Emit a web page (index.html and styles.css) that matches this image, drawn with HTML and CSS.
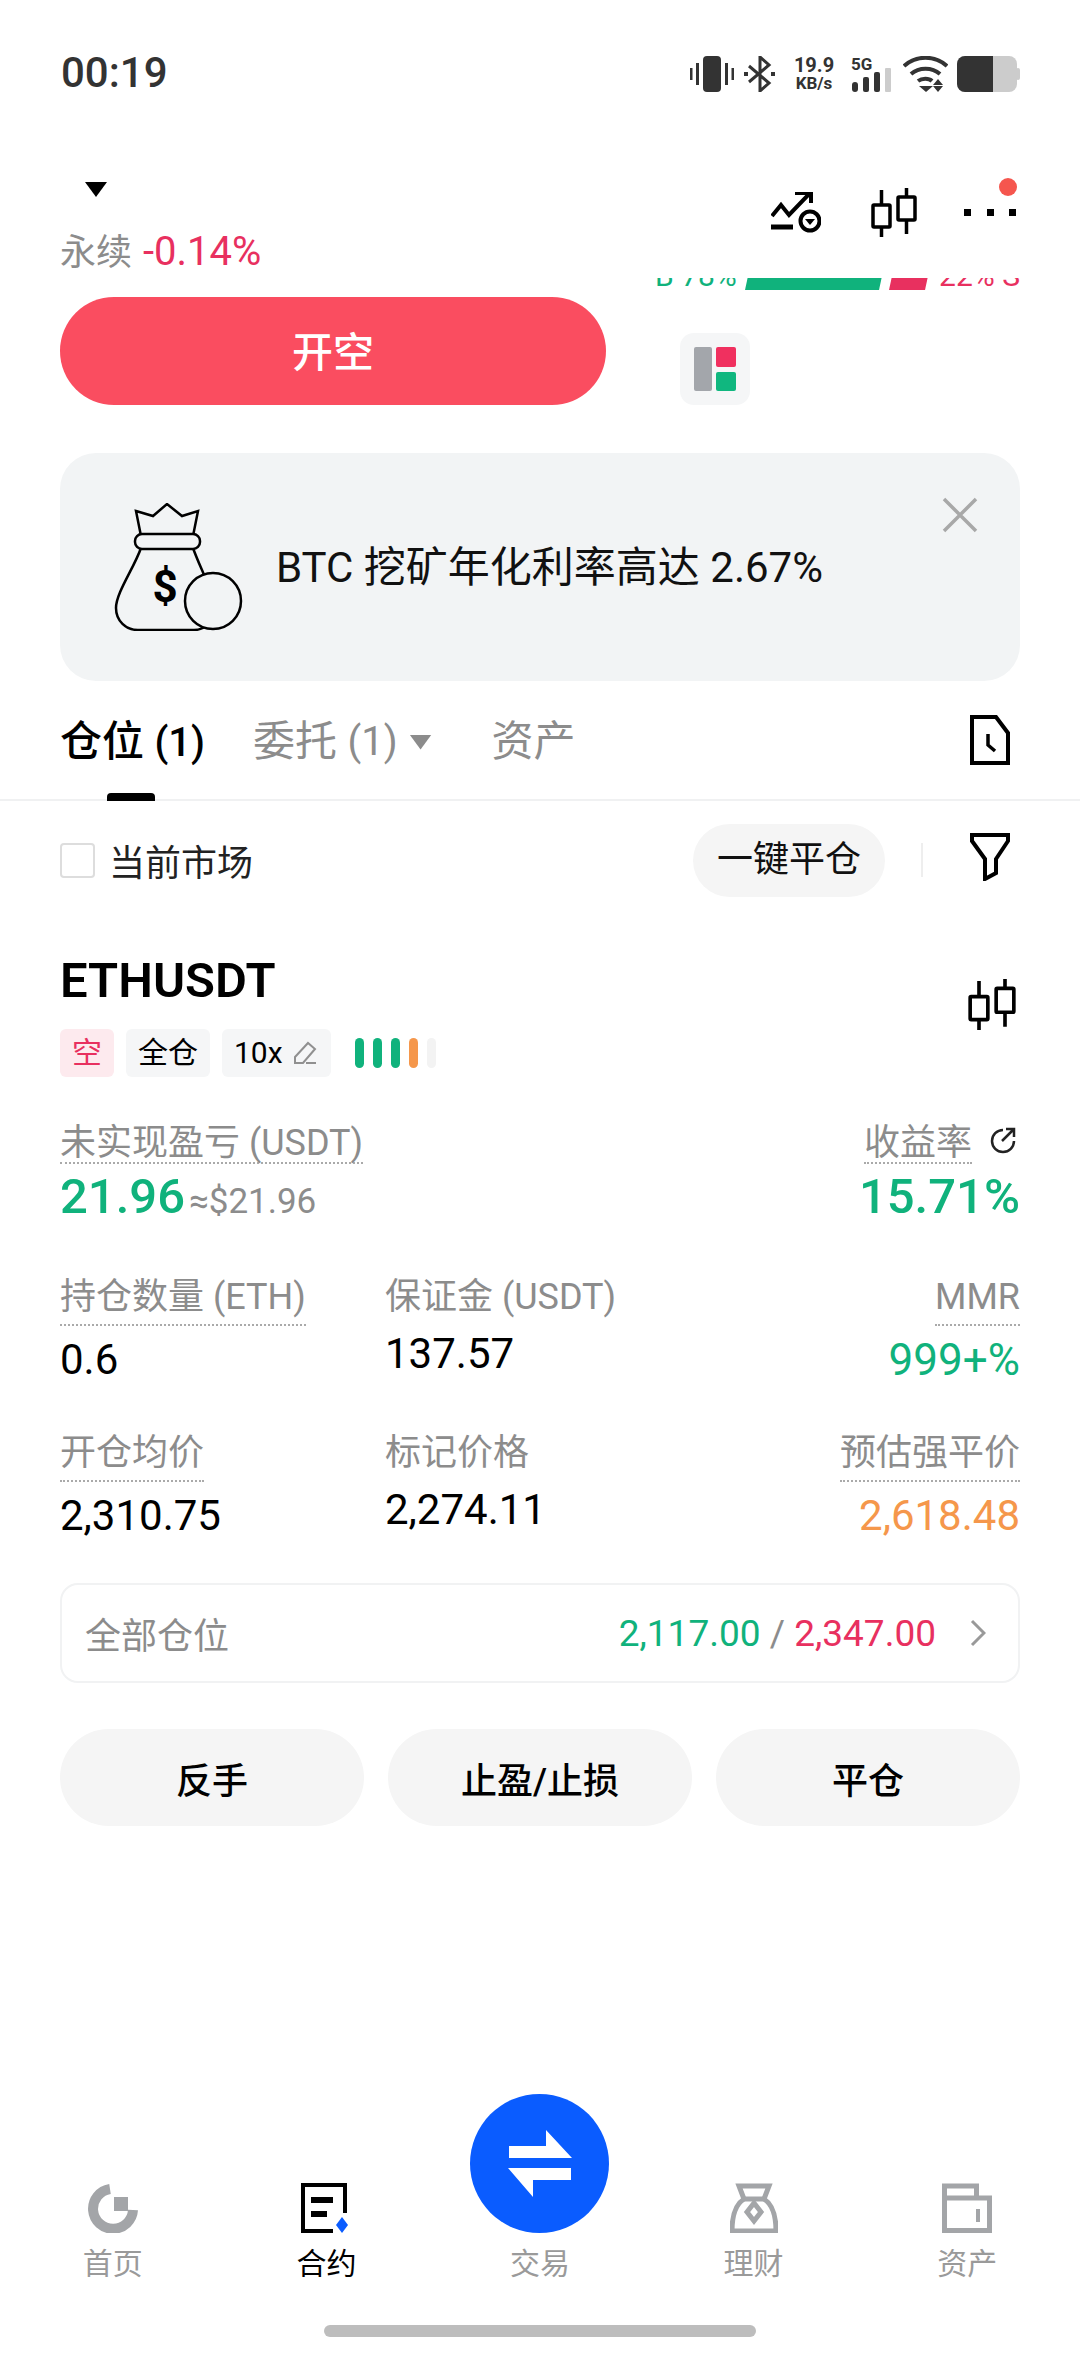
FILE: index.html
```html
<!DOCTYPE html>
<html lang="zh-CN">
<head>
    <meta charset="UTF-8">
    <meta name="viewport" content="width=device-width, initial-scale=1.0">
    <title>ETHUSDT 合约</title>
    <link rel="stylesheet" href="styles.css">
</head>
<body>
    <div class="page">
        <div class="statusbar">
            <span class="clock">00:19</span>
            <div class="status-icons">
                <svg width="44" height="36" viewBox="0 0 44 36" fill="#333">
                    <rect x="13" y="0" width="18" height="36" rx="4"/>
                    <rect x="0" y="12" width="2.5" height="12"/>
                    <rect x="6" y="7" width="3" height="22"/>
                    <rect x="35" y="7" width="3" height="22"/>
                    <rect x="41.5" y="12" width="2.5" height="12"/>
                </svg>
                <svg class="bt" width="31" height="36" viewBox="0 0 31 36" fill="none" stroke="#333" stroke-width="3">
                    <path d="M5 10l20 17-9 8V1l9 8L5 26"/>
                    <rect x="0" y="16" width="4" height="4" fill="#333" stroke="none"/>
                    <rect x="27" y="16" width="4" height="4" fill="#333" stroke="none"/>
                </svg>
                <div class="speed"><span>19.9</span><span class="speed-unit">KB/s</span></div>
                <div class="signal">
                    <span class="signal-label">5G</span>
                    <svg width="40" height="24" viewBox="0 0 40 24">
                        <rect x="0" y="14" width="6" height="10" rx="3" fill="#333"/>
                        <rect x="11" y="9" width="6" height="15" rx="2" fill="#333"/>
                        <rect x="22" y="4" width="6" height="20" rx="2" fill="#333"/>
                        <rect x="33" y="0" width="6" height="24" rx="1" fill="#ccc"/>
                    </svg>
                </div>
                <svg class="wifi" width="45" height="36" viewBox="0 0 45 36" fill="none" stroke="#333" stroke-width="4">
                    <path d="M1 10C13-1 32-1 44 10"/>
                    <path d="M8 18c8-7 21-7 29 0"/>
                    <path d="M15 25c4-3 11-3 14 0"/>
                    <path d="M16 30h14l-7 6z" fill="#333" stroke="none"/>
                    <path d="M35 23l5 6h-10zM35 36l5-6h-10z" fill="#333" stroke="none"/>
                </svg>
                <svg class="battery" width="63" height="36" viewBox="0 0 63 36">
                    <rect x="0" y="0" width="60" height="36" rx="8" fill="#ccc"/>
                    <rect x="59" y="12" width="4" height="12" rx="2" fill="#ccc"/>
                    <path d="M8 0h28v36H8a8 8 0 0 1-8-8V8a8 8 0 0 1 8-8z" fill="#333"/>
                </svg>
            </div>
        </div>

        <div class="toolbar">
            <div class="symbol">
                <span class="caret"></span>
                <div class="funding"><span class="funding-type">永续</span> <span class="funding-rate red">-0.14%</span></div>
            </div>
            <div class="tools">
                <svg width="50" height="50" viewBox="0 0 50 50" fill="none" stroke="#000" stroke-width="4">
                    <path d="M1 24l9-11 8 10L39 1"/>
                    <path d="M24 1h16v10"/>
                    <path d="M0 35h22" stroke-width="5"/>
                    <circle cx="39" cy="29" r="9.500"/>
                    <path d="M34 27h10l-5 6z" fill="#000" stroke="none"/>
                </svg>
                <svg class="candles" width="46" height="50" viewBox="0 0 46 50" fill="none" stroke="#000" stroke-width="3.500">
                    <rect x="2" y="17" width="17" height="22" rx="1"/>
                    <path d="M10.500 2v15M10.500 39v10"/>
                    <rect x="27" y="9" width="17" height="23" rx="1"/>
                    <path d="M35.500 0v9M35.500 32v14"/>
                </svg>
                <div class="more">
                    <span class="dot"></span><span class="dot"></span><span class="dot"></span>
                    <span class="badge"></span>
                </div>
            </div>
        </div>

        <div class="depth-strip">
            <div class="depth-inner">
                <span class="green">B 78%</span>
                <span class="depth-buy"></span>
                <span class="depth-sell"></span>
                <span class="red">22% S</span>
            </div>
        </div>

        <div class="order-row">
            <button class="btn-short">开空</button>
            <div class="layout-btn">
                <svg width="42" height="44" viewBox="0 0 42 44">
                    <rect x="0" y="0" width="18" height="44" rx="2" fill="#a3a6ab"/>
                    <rect x="22" y="0" width="20" height="20" rx="2" fill="#f0305f"/>
                    <rect x="22" y="25" width="20" height="19" rx="2" fill="#10b77f"/>
                </svg>
            </div>
        </div>

        <div class="banner">
            <svg class="bag" width="130" height="128" viewBox="0 0 130 128" fill="none" stroke="#000" stroke-width="2.500">
                <path d="M22 8l17 5L53 1l15 12 16-5-5 25H27z" fill="#f2f4f5"/>
                <path d="M27 45C20 65 2 90 2 105c0 13 10 22 22 22h56c12 0 20-10 20-22 0-15-14-40-21-60z" fill="#f2f4f5"/>
                <rect x="21" y="31" width="65" height="15" rx="7" fill="#f2f4f5"/>
                <ellipse cx="99" cy="98" rx="28" ry="28" fill="#f2f4f5"/>
                <text x="51" y="99" class="bag-sign">$</text>
            </svg>
            <span class="banner-text">BTC 挖矿年化利率高达 2.67%</span>
            <svg class="banner-close" width="36" height="36" viewBox="0 0 36 36" stroke="#a8a8a8" stroke-width="3.500">
                <path d="M2 2l32 32M34 2L2 34"/>
            </svg>
        </div>

        <div class="tabs">
            <span class="tab tab-active">仓位 <em>(1)</em><i class="tab-line"></i></span>
            <span class="tab tab-orders">委托&nbsp;<em>(1)</em><b class="tab-caret"></b></span>
            <span class="tab tab-assets">资产</span>
            <svg class="tab-doc" width="40" height="50" viewBox="0 0 40 50" fill="none" stroke="#000" stroke-width="4">
                <path d="M2 2h24l12 16v30H2z"/>
                <path d="M18 19v11l7 6" stroke-width="3.500"/>
            </svg>
        </div>

        <div class="filter-row">
            <span class="checkbox"></span>
            <span class="filter-label">当前市场</span>
            <span class="close-all">一键平仓</span>
            <span class="filter-sep"></span>
            <svg class="filter-icon" width="40" height="48" viewBox="0 0 40 48" fill="none" stroke="#000" stroke-width="4">
                <path d="M2 2h36v6L26 26v14l-11 6V26L2 8z"/>
            </svg>
        </div>

        <div class="position-head">
            <div>
                <h2 class="pair">ETHUSDT</h2>
                <div class="tags">
                    <span class="tag tag-short">空</span>
                    <span class="tag">全仓</span>
                    <span class="tag tag-lev">10x
                        <svg width="24" height="24" viewBox="0 0 24 24" fill="none" stroke="#909090" stroke-width="2">
                            <path d="M2 16L15 2l7 6L10 22H2zM13 22h10"/>
                        </svg>
                    </span>
                    <div class="risk">
                        <i class="risk-on"></i><i class="risk-on"></i><i class="risk-on"></i><i class="risk-warn"></i><i class="risk-off"></i>
                    </div>
                </div>
            </div>
            <svg class="candles head-candles" width="48" height="52" viewBox="0 0 46 50" fill="none" stroke="#000" stroke-width="3.500">
                <rect x="2" y="17" width="17" height="22" rx="1"/>
                <path d="M10.500 2v15M10.500 39v10"/>
                <rect x="27" y="9" width="17" height="23" rx="1"/>
                <path d="M35.500 0v9M35.500 32v14"/>
            </svg>
        </div>

        <div class="pnl-row">
            <div>
                <span class="label dotted">未实现盈亏 (USDT)</span>
                <div class="pnl-value"><span class="big green">21.96</span> <span class="approx">≈$21.96</span></div>
            </div>
            <div class="align-right">
                <div class="roi-label">
                    <span class="label dotted">收益率</span>
                    <svg width="28" height="28" viewBox="0 0 28 28" fill="none" stroke="#222" stroke-width="2.500">
                        <path d="M14 3a11 11 0 1 0 11 11"/>
                        <path d="M13 14L25 2M17 2h8v8"/>
                    </svg>
                </div>
                <div class="pnl-value"><span class="big green">15.71%</span></div>
            </div>
        </div>

        <div class="data-grid">
            <div class="cell">
                <span class="label dotted">持仓数量 (ETH)</span>
                <div class="value">0.6</div>
            </div>
            <div class="cell cell-plain">
                <span class="label">保证金 (USDT)</span>
                <div class="value">137.57</div>
            </div>
            <div class="cell align-right">
                <span class="label dotted">MMR</span>
                <div class="value value-mmr green">999+%</div>
            </div>
            <div class="cell">
                <span class="label dotted">开仓均价</span>
                <div class="value">2,310.75</div>
            </div>
            <div class="cell cell-plain">
                <span class="label">标记价格</span>
                <div class="value">2,274.11</div>
            </div>
            <div class="cell align-right">
                <span class="label dotted">预估强平价</span>
                <div class="value orange">2,618.48</div>
            </div>
        </div>

        <div class="all-positions">
            <span class="all-label">全部仓位</span>
            <span class="all-values"><span class="green">2,117.00</span> <span class="slash">/</span> <span class="red">2,347.00</span></span>
            <svg width="16" height="28" viewBox="0 0 16 28" fill="none" stroke="#999" stroke-width="3">
                <path d="M2 2l12 12L2 26"/>
            </svg>
        </div>

        <div class="actions">
            <button class="action">反手</button>
            <button class="action">止盈/止损</button>
            <button class="action">平仓</button>
        </div>

        <nav class="nav">
            <a class="nav-item">
                <svg width="50" height="50" viewBox="0 0 50 50" fill="none">
                    <path d="M22 6A20 20 0 1 0 45 27" stroke="#a3a5a8" stroke-width="10"/>
                    <rect x="26" y="14" width="14" height="14" fill="#a3a5a8"/>
                </svg>
                <span>首页</span>
            </a>
            <a class="nav-item nav-active">
                <svg width="50" height="50" viewBox="0 0 50 50" fill="none">
                    <path d="M44 30V2H2v46h30" stroke="#000" stroke-width="4"/>
                    <rect x="10" y="14" width="22" height="6" fill="#000"/>
                    <rect x="10" y="28" width="16" height="6" fill="#000"/>
                    <path d="M41 34l6 8-6 8-6-8z" fill="#0a5cff"/>
                </svg>
                <span>合约</span>
            </a>
            <a class="nav-item nav-trade">
                <svg class="nav-spacer" width="50" height="50"></svg>
                <span>交易</span>
                <div class="fab">
                    <svg width="139" height="139" viewBox="0 0 139 139">
                        <path d="M39 52h37V36l26 28H39z" fill="#fff"/>
                        <path d="M38 74h63v12H63v17z" fill="#fff"/>
                    </svg>
                </div>
            </a>
            <a class="nav-item">
                <svg width="48" height="50" viewBox="0 0 48 50" fill="none" stroke="#a3a5a8" stroke-width="5">
                    <path d="M9 3h30l-5 13c8 5 12 14 12 32H2c0-18 4-27 12-32z"/>
                    <path d="M24 20l7 9-7 9-7-9z"/>
                    <path d="M12 16h24"/>
                </svg>
                <span>理财</span>
            </a>
            <a class="nav-item">
                <svg width="50" height="50" viewBox="0 0 50 50" fill="none" stroke="#a3a5a8" stroke-width="5">
                    <path d="M2.500 47.500V3h32v12"/>
                    <path d="M2.500 15h45v32.500h-45z"/>
                    <path d="M36 26v13" stroke-width="4"/>
                </svg>
                <span>资产</span>
            </a>
        </nav>
        <div class="home-indicator"></div>
    </div>
</body>
</html>
```

FILE: styles.css
```css
* {
    box-sizing: border-box;
}
body {
    margin: 0;
    background: #fff;
    font-family: Roboto, "Noto Sans CJK SC", sans-serif;
    color: #000;
}
.page {
    width: 1080px;
    height: 2358px;
    display: flex;
    flex-direction: column;
    overflow: hidden;
}
.green { color: #10b27c; }
.red { color: #e8305f; }
.orange { color: #f5974b; }

/* status bar */
.statusbar {
    height: 100px;
    padding: 50px 60px 0 61px;
    display: flex;
    justify-content: space-between;
    align-items: flex-start;
}
.clock {
    font-size: 42px;
    font-weight: 500;
    line-height: 46px;
    color: #333;
}
.status-icons {
    display: flex;
    align-items: center;
    margin-top: 6px;
    height: 36px;
}
.bt { margin-left: 10px; }
.speed {
    width: 44px;
    margin-left: 17px;
    display: flex;
    flex-direction: column;
    align-items: center;
    font-size: 20px;
    line-height: 19px;
    font-weight: 700;
    color: #333;
}
.speed-unit {
    font-size: 17px;
    line-height: 17px;
}
.signal {
    position: relative;
    width: 41px;
    height: 36px;
    margin-left: 16px;
    padding-top: 12px;
}
.signal-label {
    position: absolute;
    left: -1px;
    top: 0;
    font-size: 17px;
    line-height: 17px;
    font-weight: 700;
    color: #333;
}
.wifi { margin-left: 10px; }
.battery { margin-left: 9px; }

/* top toolbar */
.toolbar {
    height: 178px;
    padding: 0 60px;
    display: flex;
    justify-content: space-between;
}
.symbol {
    padding-top: 82px;
}
.caret {
    display: block;
    width: 22px;
    height: 15px;
    margin-left: 25px;
    background: #000;
    clip-path: polygon(0 0, 100% 0, 50% 100%);
}
.funding {
    margin-top: 33px;
    font-size: 36px;
    line-height: 44px;
}
.funding-type { color: #8c8c8c; }
.funding-rate {
    font-size: 40px;
    margin-left: 2px;
}
.tools {
    display: flex;
    align-items: flex-start;
    padding-top: 92px;
}
.tools .candles {
    margin-left: 50px;
    margin-top: -4px;
}
.more {
    position: relative;
    width: 52px;
    height: 50px;
    margin-left: 47px;
    margin-right: 4px;
    padding-top: 17px;
    display: flex;
    justify-content: space-between;
    align-items: flex-start;
}
.dot {
    width: 7px;
    height: 7px;
    background: #000;
}
.badge {
    position: absolute;
    right: -1px;
    top: -14px;
    width: 18px;
    height: 18px;
    border-radius: 50%;
    background: #f5564e;
}

/* clipped depth bar */
.depth-strip {
    height: 12px;
    overflow: hidden;
    padding: 0 60px 0 655px;
}
.depth-inner {
    margin-top: -16px;
    display: flex;
    align-items: center;
    justify-content: space-between;
    font-size: 30px;
    line-height: 28px;
}
.depth-buy {
    width: 134px;
    height: 28px;
    background: #10b27c;
    transform: skewX(-12deg);
}
.depth-sell {
    width: 36px;
    height: 28px;
    background: #e8305f;
    transform: skewX(-12deg);
}

.order-row {
    margin-top: 7px;
    padding: 0 60px;
    display: flex;
    align-items: flex-end;
    gap: 74px;
}
.btn-short {
    width: 546px;
    height: 108px;
    border: none;
    border-radius: 54px;
    background: #fa4d60;
    color: #fff;
    font-family: inherit;
    font-size: 41px;
    font-weight: 500;
    padding-bottom: 6px;
}
.layout-btn {
    width: 70px;
    height: 72px;
    border-radius: 14px;
    background: #f5f6f7;
    display: flex;
    align-items: center;
    justify-content: center;
}

/* banner */
.banner {
    position: relative;
    margin: 48px 60px 0;
    height: 228px;
    padding-left: 54px;
    border-radius: 36px;
    background: #f2f4f5;
    display: flex;
    align-items: center;
    gap: 32px;
}
.bag { flex: none; }
.bag-sign {
    font-size: 44px;
    font-weight: 700;
    text-anchor: middle;
    fill: #000;
    stroke: none;
}
.banner-text {
    font-size: 42px;
    color: #111;
    padding-bottom: 8px;
}
.banner-close {
    position: absolute;
    right: 42px;
    top: 44px;
}

/* tabs */
.tabs {
    height: 120px;
    padding: 0 70px 0 60px;
    border-bottom: 2px solid #f0f1f2;
    display: flex;
    align-items: flex-start;
    font-size: 42px;
    line-height: 60px;
}
.tab {
    position: relative;
    margin-top: 31px;
    color: #8c8c8c;
    white-space: nowrap;
}
.tab em {
    font-style: normal;
    font-size: 40px;
}
.tab-active {
    color: #000;
    font-weight: 500;
}
.tab-line {
    position: absolute;
    left: 47px;
    top: 81px;
    width: 48px;
    height: 8px;
    border-radius: 4px 4px 0 0;
    background: #000;
}
.tab-orders {
    margin-left: 48px;
    display: flex;
    align-items: center;
}
.tab-caret {
    width: 22px;
    height: 15px;
    margin-left: 12px;
    background: #8c8c8c;
    clip-path: polygon(0 0, 100% 0, 50% 100%);
}
.tab-assets { margin-left: 60px; }
.tab-doc {
    margin-left: auto;
    margin-top: 34px;
}

/* filter row */
.filter-row {
    margin-top: 22px;
    padding: 0 70px 0 60px;
    height: 74px;
    display: flex;
    align-items: center;
}
.checkbox {
    width: 35px;
    height: 35px;
    border: 2px solid #ddd;
    border-radius: 4px;
}
.filter-label {
    margin-left: 14px;
    font-size: 36px;
    color: #222;
}
.close-all {
    margin-left: auto;
    width: 192px;
    height: 73px;
    border-radius: 37px;
    background: #f5f5f5;
    font-size: 36px;
    line-height: 73px;
    text-align: center;
    color: #111;
}
.filter-sep {
    width: 2px;
    height: 34px;
    margin: 0 47px 0 36px;
    background: #eee;
}
.filter-icon { margin-top: -6px; }

/* position card */
.position-head {
    margin-top: 56px;
    padding: 0 64px 0 60px;
    display: flex;
    justify-content: space-between;
    align-items: flex-start;
}
.head-candles { margin-top: 26px; }
.pair {
    margin: 0;
    font-size: 49px;
    font-weight: 600;
    line-height: 56px;
}
.tags {
    margin-top: 20px;
    display: flex;
    align-items: center;
    gap: 12px;
}
.tag {
    height: 48px;
    padding: 0 12px;
    border-radius: 6px;
    background: #f5f6f7;
    font-size: 30px;
    line-height: 48px;
    display: flex;
    align-items: center;
    gap: 10px;
}
.tag-short {
    background: #fdeaee;
    color: #e8305f;
}
.tag-lev { padding: 0 14px 0 12px; }
.risk {
    margin-left: 12px;
    display: flex;
    gap: 9px;
}
.risk i {
    width: 9px;
    height: 30px;
    border-radius: 5px;
}
.risk-on { background: #10b27c; }
.risk-warn { background: #f5974b; }
.risk-off { background: #f3f3f3; }

.label {
    display: inline-block;
    padding-top: 6px;
    font-size: 36px;
    line-height: 38px;
    color: #8c8c8c;
}
.dotted {
    border-bottom: 2px dotted #aaa;
}
.align-right {
    text-align: right;
}
.pnl-row {
    margin-top: 41px;
    padding: 0 60px;
    display: flex;
    justify-content: space-between;
}
.roi-label {
    display: flex;
    align-items: center;
    gap: 17px;
    padding-right: 3px;
    justify-content: flex-end;
}
.pnl-value {
    margin-top: 3px;
    line-height: 60px;
}
.big {
    font-size: 49px;
    font-weight: 500;
}
.approx {
    font-size: 35px;
    color: #8c8c8c;
}
.data-grid {
    margin-top: 34px;
    padding: 0 60px;
    display: grid;
    grid-template-columns: 325px 1fr auto;
    row-gap: 43px;
}
.cell .dotted {
    padding-bottom: 8px;
}
.value {
    margin-top: 9px;
    font-size: 42px;
    line-height: 50px;
}
.value-mmr { font-size: 44px; }
.cell-plain .value { margin-top: 13px; }

.all-positions {
    margin: 42px 60px 0;
    height: 100px;
    padding: 0 32px 0 23px;
    border: 2px solid #f1f2f3;
    border-radius: 18px;
    display: flex;
    align-items: center;
}
.all-label {
    font-size: 36px;
    color: #8c8c8c;
}
.all-values {
    margin-left: auto;
    margin-right: 34px;
    font-size: 37px;
}
.slash { color: #8c8c8c; }

.actions {
    margin-top: 46px;
    padding: 0 60px;
    display: grid;
    grid-template-columns: repeat(3, 1fr);
    gap: 24px;
}
.action {
    height: 97px;
    border: none;
    border-radius: 49px;
    background: #f5f5f5;
    color: #000;
    font-family: inherit;
    font-size: 36px;
    font-weight: 500;
}

/* bottom nav */
.nav {
    margin-top: auto;
    padding: 0 6px;
    display: grid;
    grid-template-columns: repeat(5, 1fr);
}
.nav-item {
    position: relative;
    display: flex;
    flex-direction: column;
    align-items: center;
    font-size: 30px;
    line-height: 40px;
    color: #9a9a9a;
}
.nav-item span {
    margin-top: 11px;
}
.nav-active { color: #000; }
.fab {
    position: absolute;
    left: 50%;
    bottom: 51px;
    width: 139px;
    height: 139px;
    margin-left: -70px;
    border-radius: 50%;
    background: #0a5cff;
}
.home-indicator {
    width: 432px;
    height: 12px;
    margin: 41px auto 21px;
    border-radius: 6px;
    background: #bdbdbd;
}
```
